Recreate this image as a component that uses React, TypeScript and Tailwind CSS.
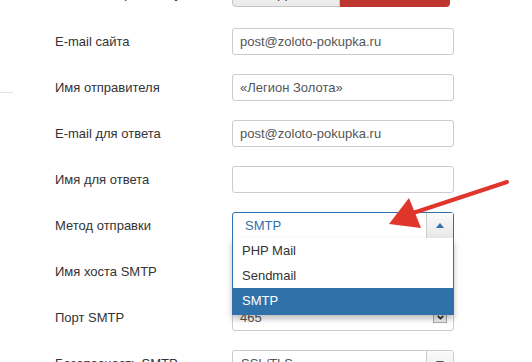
import { ChevronDown } from "lucide-react";

type Row = { label: string; value?: string };

const textRows: Row[] = [
    { label: "E-mail сайта", value: "post@zoloto-pokupka.ru" },
    { label: "Имя отправителя", value: "«Легион Золота»" },
    { label: "E-mail для ответа", value: "post@zoloto-pokupka.ru" },
    { label: "Имя для ответа", value: "" },
];

function Label({ children }: { children: React.ReactNode }) {
    return <div className="w-[232px] shrink-0 whitespace-nowrap pl-[55px] text-[13px] text-[#333]">{children}</div>;
}

function TextInput({ value }: { value?: string }) {
    return (
        <div className="flex h-[27px] w-[222px] items-center rounded-[3px] border border-[#ccc] bg-white px-[7px] text-[13px] text-[#555]">
            {value}
        </div>
    );
}

function CaretButton({ up, color = "#555" }: { up?: boolean; color?: string }) {
    return (
        <div className="flex h-full w-[27px] items-center justify-center border-l border-[#ccc] bg-gradient-to-b from-[#fafafa] to-[#e8e8e8]">
            <svg width="8" height="5" viewBox="0 0 8 5">
                {up ? <polygon points="0,5 8,5 4,0" fill={color} /> : <polygon points="0,0 8,0 4,5" fill={color} />}
            </svg>
        </div>
    );
}

export default function App() {
    return (
        <div className="relative h-[362px] w-[532px] overflow-hidden bg-white font-['Liberation_Sans',Arial,sans-serif]">
            {/* sidebar edge */}
            <div className="absolute left-0 top-[92px] h-px w-[13px] bg-[#e3e3e3]" />

            <div className="-mt-[20px] flex flex-col gap-[19px]">
                {/* toggle row */}
                <div className="mb-[2px] flex h-[27px] items-center">
                    <Label>Отключить рассылку</Label>
                    <div className="flex h-full w-[218px] text-[13px]">
                        <div className="flex w-[108px] items-center justify-center rounded-l-[4px] border border-[#c5c5c5] bg-gradient-to-b from-[#fdfdfd] to-[#e9e9e9] text-[#333]">
                            Да
                        </div>
                        <div className="flex flex-1 items-center justify-center rounded-r-[4px] bg-[#bd362f] text-white">Нет</div>
                    </div>
                </div>

                {textRows.map((r) => (
                    <div key={r.label} className="flex h-[27px] items-center">
                        <Label>{r.label}</Label>
                        <TextInput value={r.value} />
                    </div>
                ))}

                {/* send method select, opened */}
                <div className="relative z-10 flex h-[27px] items-center">
                    <Label>Метод отправки</Label>
                    <div className="relative h-full w-[222px]">
                        <div className="flex h-full items-center rounded-t-[3px] border border-[#3071a9] bg-white text-[13px] text-[#3071a9]">
                            <span className="flex-1 pl-[12px]">SMTP</span>
                            <CaretButton up color="#3071a9" />
                        </div>
                        <div className="absolute left-0 top-[26px] flex w-full flex-col border border-t-0 border-[#3071a9] bg-white text-[13px] text-[#333] shadow-[0_4px_6px_rgba(0,0,0,0.25)]">
                            <div className="flex h-[25px] items-center px-[9px]">PHP Mail</div>
                            <div className="flex h-[25px] items-center px-[9px]">Sendmail</div>
                            <div className="flex h-[26px] items-center bg-[#3071a9] px-[9px] text-white">SMTP</div>
                        </div>
                    </div>
                </div>

                <div className="flex h-[27px] items-center">
                    <Label>Имя хоста SMTP</Label>
                    <TextInput value="" />
                </div>

                <div className="flex h-[27px] items-center">
                    <Label>Порт SMTP</Label>
                    <div className="flex h-[27px] w-[222px] items-center rounded-[3px] border border-[#ccc] bg-white pl-[7px] pr-[6px] text-[13px] text-[#555]">
                        <span className="flex-1">465</span>
                        <div className="flex h-[10px] w-[14px] items-center justify-center border border-[#aaa] bg-[#eee]">
                            <ChevronDown className="h-[9px] w-[9px] text-[#222]" strokeWidth={4} />
                        </div>
                    </div>
                </div>

                <div className="flex h-[27px] items-center">
                    <Label>Безопасность SMTP</Label>
                    <div className="flex h-full w-[222px] items-center overflow-hidden rounded-[3px] border border-[#ccc] bg-white text-[13px] text-[#555]">
                        <span className="flex-1 pl-[8px]">SSL/TLS</span>
                        <CaretButton />
                    </div>
                </div>
            </div>

            {/* red pointer arrow */}
            <svg className="absolute left-0 top-0 z-20" width="532" height="362" viewBox="0 0 532 362">
                <line x1="507" y1="182" x2="410" y2="214" stroke="#e0352b" strokeWidth="4" strokeLinecap="round" />
                <polygon points="389,224 409,198 421,228" fill="#e0352b" />
            </svg>
        </div>
    );
}
